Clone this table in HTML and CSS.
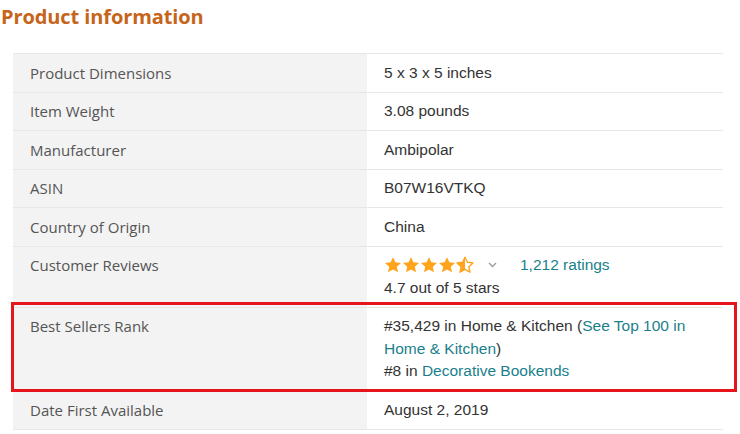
FILE: index.html
```html
<!DOCTYPE html>
<html>
<head>
<meta charset="utf-8">
<link rel="stylesheet" href="styles.css">
</head>
<body>
<div class="page">
  <h2 class="title">Product information</h2>
  <table class="info">
    <tr><th>Product Dimensions</th><td>5 x 3 x 5 inches</td></tr>
    <tr><th>Item Weight</th><td>3.08 pounds</td></tr>
    <tr><th>Manufacturer</th><td>Ambipolar</td></tr>
    <tr><th>ASIN</th><td>B07W16VTKQ</td></tr>
    <tr><th>Country of Origin</th><td>China</td></tr>
    <tr><th>Customer Reviews</th><td>
      <div class="rating">
        <span class="stars">
          <svg width="90" height="18" viewBox="0 0 90 18">
            <defs>
              <path id="st" d="M9 1.2l2.4 5.1 5.6.6-4.2 3.8 1.2 5.5L9 13.4l-5 2.8 1.2-5.5L1 6.9l5.6-.6z"/>
              <clipPath id="half"><rect x="0" y="0" width="9" height="18"/></clipPath>
            </defs>
            <use href="#st" x="0" fill="#ffa41c"/>
            <use href="#st" x="18" fill="#ffa41c"/>
            <use href="#st" x="36" fill="#ffa41c"/>
            <use href="#st" x="54" fill="#ffa41c"/>
            <g transform="translate(72 0)">
              <path d="M9 1.2l2.4 5.1 5.6.6-4.2 3.8 1.2 5.5L9 13.4l-5 2.8 1.2-5.5L1 6.9l5.6-.6z" fill="none" stroke="#ffa41c" stroke-width="1.4" stroke-linejoin="round"/>
              <path d="M9 1.2l2.4 5.1 5.6.6-4.2 3.8 1.2 5.5L9 13.4l-5 2.8 1.2-5.5L1 6.9l5.6-.6z" fill="#ffa41c" clip-path="url(#half)"/>
            </g>
          </svg>
        </span>
        <svg class="chev" width="9" height="6" viewBox="0 0 9 6"><path d="M1 1l3.5 3.5L8 1" fill="none" stroke="#999" stroke-width="1.3"/></svg>
        <a class="link">1,212 ratings</a>
      </div>
      <div>4.7 out of 5 stars</div>
    </td></tr>
    <tr><th>Best Sellers Rank</th><td>#35,429 in Home &amp; Kitchen (<a class="link">See Top 100 in Home &amp; Kitchen</a>)<br>#8 in <a class="link">Decorative Bookends</a></td></tr>
    <tr><th>Date First Available</th><td>August 2, 2019</td></tr>
  </table>
  <div class="highlight"></div>
</div>
</body>
</html>
```
FILE: styles.css
```css
html, body {
  margin: 0;
  padding: 0;
  background: #fff;
}
.page {
  position: relative;
  width: 740px;
  height: 434px;
  overflow: hidden;
}
.title {
  margin: 0;
  padding: 4px 0 0 1px;
  font-family: "Open Sans", "Noto Sans", sans-serif;
  font-weight: 700;
  font-size: 20px;
  line-height: 26px;
  color: #c6641a;
  letter-spacing: -0.1px;
}
.info {
  margin: 23px 0 0 13px;
  width: 710px;
  border-collapse: collapse;
  table-layout: fixed;
}
.info tr {
  border-top: 1px solid #e7e7e7;
  border-bottom: 1px solid #e7e7e7;
}
.info th {
  width: 320px;
  background: #f3f3f3;
  text-align: left;
  vertical-align: top;
  font-weight: 400;
  font-family: "Open Sans", "Noto Sans", sans-serif;
  font-size: 15px;
  color: #555;
  line-height: 22.5px;
  padding: 7.5px 17px 7.5px 17px;
}
.info td {
  vertical-align: top;
  font-family: "Liberation Sans", Arial, sans-serif;
  font-size: 15.5px;
  color: #333;
  line-height: 22.5px;
  padding: 7.5px 17px 7.5px 17px;
}
.link {
  color: #1a7f8c;
}
.rating {
  display: flex;
  align-items: center;
  height: 22.5px;
}
.stars {
  display: flex;
  align-items: center;
}
.chev {
  margin-left: 14px;
  margin-right: 23px;
}
.highlight {
  position: absolute;
  left: 11px;
  top: 302px;
  width: 720px;
  height: 84px;
  border: 3px solid #e8141b;
}
```
